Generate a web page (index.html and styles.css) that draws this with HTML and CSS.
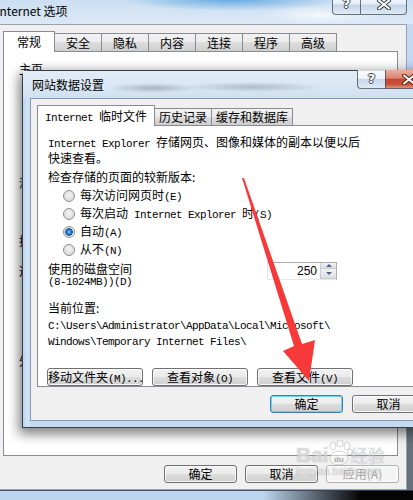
FILE: index.html
```html
<!DOCTYPE html>
<html>

<head>
    <meta charset="UTF-8">
    <title>网站数据设置</title>
    <link rel="stylesheet" href="styles.css">
</head>

<body>
    <!-- janela de trás: Internet 选项 -->
    <div class="win">
        <div class="win-title">
            <span class="win-caption">Internet 选项</span>
            <div class="caption-btns">
                <span class="cbtn cbtn-help">?</span>
                <span class="cbtn cbtn-close">
                    <svg width="14" height="11" viewBox="0 0 14 11"><path d="M2 1.5 L12 9.5 M12 1.5 L2 9.5" stroke="#3a3f48" stroke-width="4" stroke-linecap="round"/><path d="M2 1.5 L12 9.5 M12 1.5 L2 9.5" stroke="#fff" stroke-width="2" stroke-linecap="round"/></svg>
                </span>
            </div>
        </div>
        <div class="win-client">
            <div class="tabs win-tabs">
                <span class="tab tab-sel">常规</span>
                <span class="tab">安全</span>
                <span class="tab">隐私</span>
                <span class="tab">内容</span>
                <span class="tab">连接</span>
                <span class="tab">程序</span>
                <span class="tab">高级</span>
            </div>
            <div class="panel win-panel">
                <div class="bg-group bg-home">主页</div>
                <div class="bg-group bg-history">浏览历史记录</div>
                <div class="bg-group bg-search">搜索</div>
                <div class="bg-group bg-tabs">选项卡</div>
                <div class="bg-group">外观</div>
            </div>
            <div class="btn-row win-btns">
                <button class="btn">确定</button>
                <button class="btn">取消</button>
                <button class="btn" disabled>应用(A)</button>
            </div>
        </div>
    </div>

    <!-- dialogo da frente: 网站数据设置 -->
    <div class="dlg">
        <div class="dlg-title">
            <span class="dlg-caption">网站数据设置</span>
            <div class="caption-btns dlg-caption-btns">
                <span class="cbtn cbtn-help">?</span>
                <span class="cbtn cbtn-close cbtn-red">
                    <svg width="14" height="11" viewBox="0 0 14 11"><path d="M2 1.5 L12 9.5 M12 1.5 L2 9.5" stroke="#5a2418" stroke-width="4" stroke-linecap="round"/><path d="M2 1.5 L12 9.5 M12 1.5 L2 9.5" stroke="#fff" stroke-width="2" stroke-linecap="round"/></svg>
                </span>
            </div>
        </div>
        <div class="dlg-client">
            <div class="tabs dlg-tabs">
                <span class="tab tab-sel"><span class="en">Internet </span>临时文件</span>
                <span class="tab">历史记录</span>
                <span class="tab">缓存和数据库</span>
            </div>
            <div class="panel dlg-panel">
                <p class="txt"><span class="en">Internet Explorer </span>存储网页、图像和媒体的副本以便以后<br>快速查看。</p>
                <p class="txt sect">检查存储的页面的较新版本:</p>
                <div class="radios">
                    <div class="radio-row"><span class="radio"></span><span>每次访问网页时<span class="en">(E)</span></span></div>
                    <div class="radio-row"><span class="radio"></span><span>每次启动<span class="en"> Internet Explorer </span>时<span class="en">(S)</span></span></div>
                    <div class="radio-row"><span class="radio radio-on"></span><span>自动<span class="en">(A)</span></span></div>
                    <div class="radio-row"><span class="radio"></span><span>从不<span class="en">(N)</span></span></div>
                </div>
                <div class="disk">
                    <div class="disk-label">使用的磁盘空间<br><span class="en">(8-1024MB))(D)</span></div>
                    <div class="spin">
                        <span class="spin-val">250</span>
                        <span class="spin-arrows"><i class="spin-up"></i><i class="spin-down"></i></span>
                    </div>
                </div>
                <p class="txt loc">当前位置:</p>
                <p class="txt path"><span class="en">C:\Users\Administrator\AppData\Local\Microsoft\<br>Windows\Temporary Internet Files\</span></p>
                <div class="panel-btns">
                    <button class="btn btn-wide">移动文件夹<span class="en">(M)...</span></button>
                    <button class="btn btn-wide">查看对象<span class="en">(O)</span></button>
                    <button class="btn btn-wide">查看文件<span class="en">(V)</span></button>
                </div>
            </div>
            <div class="btn-row dlg-btns">
                <button class="btn btn-default">确定</button>
                <button class="btn">取消</button>
            </div>
        </div>
    </div>

    <!-- seta vermelha por cima -->
    <svg class="arrow" width="413" height="500" viewBox="0 0 413 500">
        <polygon points="242,178 244,178 302,344 315,340 309,381 283,351 294,346" fill="#f7393a"/>
    </svg>

    <!-- marca d'agua -->
    <div class="watermark">
        <div class="wm-logo">
            <span class="wm-bai">Bai</span>
            <svg class="wm-paw" width="26" height="26" viewBox="0 0 26 26">
                <ellipse cx="6" cy="6" rx="3" ry="4"/>
                <ellipse cx="13" cy="3.5" rx="3" ry="3.5"/>
                <ellipse cx="20" cy="6" rx="3" ry="4"/>
                <ellipse cx="23" cy="12" rx="2.5" ry="3"/>
                <ellipse cx="12" cy="18" rx="9" ry="7"/>
                <text x="12" y="22" text-anchor="middle">du</text>
            </svg>
            <span class="wm-cn">经验</span>
        </div>
        <div class="wm-url">jingyan.baidu.com</div>
    </div>
</body>

</html>
```

FILE: styles.css
```css
html,
body {
    margin: 0;
}

body {
    position: relative;
    width: 413px;
    height: 500px;
    overflow: hidden;
    background:
        radial-gradient(ellipse 150px 170px at 100% 100%, #050505 35%, rgba(5, 5, 5, 0) 100%),
        #bcd5ee;
    font: 12px/16px "Noto Sans CJK SC", sans-serif;
    color: #000;
}

/* texto latino em largura de meio caractere (como SimSun) */
.en {
    font-family: "Liberation Mono", monospace;
    font-size: 11px;
    letter-spacing: -0.6px;
}

/* ---------- janela de trás ---------- */
.win {
    box-sizing: border-box;
    width: 426px;
    margin: -6px 0 0 -10px;
    border: 1px solid rgba(30, 40, 55, .75);
    border-radius: 6px 6px 0 0;
    background: rgba(200, 222, 244, .5);
}

.win-title {
    display: flex;
    justify-content: space-between;
    height: 29px;
    background:
        radial-gradient(ellipse 110px 12px at 240px 4px, rgba(60, 150, 220, .75), rgba(60, 150, 220, 0)),
        radial-gradient(ellipse 60px 10px at 330px 20px, rgba(255, 255, 255, .7), rgba(255, 255, 255, 0)),
        linear-gradient(#c9ddf1, #dbe8f6);
}

.win-caption {
    padding: 8px 0 0 5px;
    line-height: 16px;
    font-size: 12px;
}

.caption-btns {
    display: flex;
    align-self: flex-start;
    margin-right: 8px;
}

.cbtn {
    display: flex;
    align-items: flex-end;
    justify-content: center;
    box-sizing: border-box;
    height: 20px;
    padding-bottom: 4px;
    border: 1px solid rgba(60, 70, 90, .75);
    border-top: none;
    background: linear-gradient(rgba(255, 255, 255, .8), rgba(245, 248, 252, .6) 48%, rgba(190, 205, 225, .7) 52%, rgba(225, 235, 247, .8));
    color: #fff;
    font: bold 13px/1 "DejaVu Sans", sans-serif;
    text-shadow: 1px 0 #3a3f48, -1px 0 #3a3f48, 0 1px #3a3f48, 0 -1px #3a3f48;
}

.cbtn-help {
    width: 28px;
    border-right: none;
    border-radius: 0 0 0 4px;
}

.cbtn-close {
    width: 47px;
    border-radius: 0 0 4px 0;
}

.cbtn-red {
    background: linear-gradient(#eab0a2, #d8826e 45%, #c4482f 52%, #c9533a 80%, #e0937a);
}

.win-client {
    box-sizing: border-box;
    height: 466px;
    margin: 0 8px;
    border: 1px solid #97a3b2;
    background: #f0f0f0;
}

/* abas */
.tabs {
    display: flex;
    align-items: flex-end;
    height: 26px;
}

.tab {
    box-sizing: border-box;
    height: 18px;
    margin-right: -1px;
    padding: 0 11px;
    border: 1px solid #898c95;
    border-bottom: none;
    background: linear-gradient(#f2f2f2, #ebebeb 50%, #dddddd 50%, #cfcfcf);
    line-height: 17px;
    white-space: pre;
}

.tab-sel {
    position: relative;
    z-index: 1;
    height: 21px;
    margin-bottom: -1px;
    padding: 0 13px;
    background: #fff;
}

.win-tabs {
    padding-left: 3px;
}

.win-tabs .tab-sel {
    line-height: 19px;
}

.panel {
    box-sizing: border-box;
    border: 1px solid #898c95;
    background: #fff;
}

.win-panel {
    height: 405px;
    margin: 0 8px 0 3px;
    padding: 9px 0 0 15px;
}

.bg-group {
    height: 30px;
}

.bg-home {
    height: 114px;
}

.bg-history {
    height: 58px;
}

.bg-search {
    height: 30px;
}

.bg-tabs {
    height: 90px;
}

/* botoes */
.btn-row {
    display: flex;
    justify-content: flex-end;
    gap: 8px;
}

.win-btns {
    padding: 9px 7px 0 0;
}

.btn {
    box-sizing: border-box;
    width: 73px;
    height: 18px;
    padding: 0;
    border: 1px solid #707070;
    border-radius: 3px;
    background: linear-gradient(#f2f2f2, #ebebeb 50%, #dddddd 50%, #cfcfcf);
    box-shadow: inset 0 0 0 1px rgba(255, 255, 255, .8);
    font: 12px/16px "Noto Sans CJK SC", sans-serif;
    color: #000;
    white-space: nowrap;
    overflow: hidden;
}

.btn:disabled {
    border-color: #adb2b5;
    background: #f4f4f4;
    color: #a3a3a3;
}

.btn-default {
    border-color: #3c7fb1;
    box-shadow: inset 0 0 0 1px #6fd0f5;
}

.btn-wide {
    width: 96px;
}

/* ---------- dialogo da frente ---------- */
.dlg {
    position: absolute;
    left: 22px;
    top: 70px;
    box-sizing: border-box;
    width: 418px;
    height: 358px;
    border: 1px solid rgba(25, 35, 50, .85);
    border-radius: 6px 6px 0 0;
    background: linear-gradient(90deg, #b9d3ee, #d3e3f4 4px, #c4daf0 8px, #c4daf0);
    box-shadow: -1px 4px 12px 2px rgba(0, 0, 0, .5);
}

.dlg-title {
    display: flex;
    justify-content: space-between;
    height: 27px;
    background:
        radial-gradient(ellipse 45px 5px at 130px 17px, rgba(80, 90, 100, .35), rgba(80, 90, 100, 0)),
        radial-gradient(ellipse 70px 5px at 230px 16px, rgba(80, 90, 100, .3), rgba(80, 90, 100, 0)),
        linear-gradient(#e2ecf7, #d1e1f2);
}

.dlg-caption {
    padding-left: 9px;
    line-height: 27px;
    font-size: 12px;
}

.dlg-caption-btns {
    margin: -1px 7px 0 0;
}

.dlg-caption-btns .cbtn {
    height: 19px;
    padding-bottom: 3px;
}

.dlg-client {
    box-sizing: border-box;
    height: 323px;
    margin: 0 7px;
    border: 1px solid #8399b5;
    background: #f0f0f0;
}

.dlg-tabs {
    padding-left: 6px;
}

.dlg-tabs .tab {
    height: 17px;
    padding: 0 4px;
    line-height: 16px;
}

.dlg-tabs .tab-sel {
    height: 21px;
    padding: 0 7px;
    line-height: 19px;
}

.dlg-panel {
    height: 262px;
    margin: 0 6px;
    padding: 9px 10px 0;
}

.txt {
    margin: 0;
    line-height: 13px;
}

.sect {
    margin-top: 6px;
}

.radios {
    margin-top: 4px;
}

.radio-row {
    display: flex;
    align-items: center;
    gap: 5px;
    height: 18px;
    padding-left: 15px;
}

.radio {
    box-sizing: border-box;
    width: 12px;
    height: 12px;
    border: 1px solid #8e8f8f;
    border-radius: 50%;
    background: radial-gradient(circle at 50% 40%, #f4f4f4, #dcdcdc 70%, #eeeeee);
}

.radio-on {
    background: radial-gradient(circle at 50% 50%, #8cc8f8 0, #2a7fd4 2px, #0d4f9e 3.5px, #e6e6e6 4px, #f6f6f6 6px);
}

.disk {
    display: flex;
    margin-top: 4px;
}

.disk-label {
    width: 219px;
    line-height: 11px;
}

.spin {
    display: flex;
    box-sizing: border-box;
    width: 70px;
    height: 18px;
    margin-top: -1px;
    border: 1px solid #abadb3;
    border-left-color: #e2e3ea;
    border-bottom-color: #e3e9ef;
}

.spin-val {
    flex: 1;
    padding-right: 3px;
    text-align: right;
    font: 12px/16px "Liberation Sans", sans-serif;
}

.spin-arrows {
    display: flex;
    flex-direction: column;
    width: 15px;
    border-left: 1px solid #c8ccd4;
}

.spin-arrows i {
    flex: 1;
    display: flex;
    align-items: center;
    justify-content: center;
    background: linear-gradient(#f3f3f3, #dedede);
    border-bottom: 1px solid #c8ccd4;
}

.spin-up::after,
.spin-down::after {
    content: "";
    border: 3px solid transparent;
}

.spin-up::after {
    border-bottom-color: #4d6185;
    margin-top: -3px;
}

.spin-down::after {
    border-top-color: #4d6185;
    margin-top: 3px;
}

.loc {
    margin-top: 13px;
}

.path {
    margin-top: 3px;
}

.panel-btns {
    display: flex;
    gap: 9px;
    margin: 19px 0 0 -1px;
}

.dlg-btns {
    gap: 9px;
    padding: 8px 6px 0 0;
}

/* ---------- sobreposicoes ---------- */
.arrow {
    position: absolute;
    left: 0;
    top: 0;
    pointer-events: none;
}

.watermark {
    position: absolute;
    left: 296px;
    top: 440px;
    color: rgba(255, 255, 255, .6);
    text-shadow: 0 0 1px rgba(120, 120, 120, .7);
}

.wm-logo {
    display: flex;
    align-items: flex-end;
}

.wm-bai {
    font: bold 21px/22px "Liberation Sans", sans-serif;
}

.wm-paw {
    margin: 0 -2px 0 -2px;
    fill: rgba(255, 255, 255, .55);
    stroke: rgba(140, 140, 140, .6);
    stroke-width: .6;
}

.wm-paw text {
    font: bold 8px "Liberation Sans", sans-serif;
    fill: rgba(160, 160, 160, .6);
    stroke: none;
}

.wm-cn {
    font-size: 17px;
    line-height: 22px;
}

.wm-url {
    font: 10px/12px "Liberation Sans", sans-serif;
    letter-spacing: .3px;
}
```
